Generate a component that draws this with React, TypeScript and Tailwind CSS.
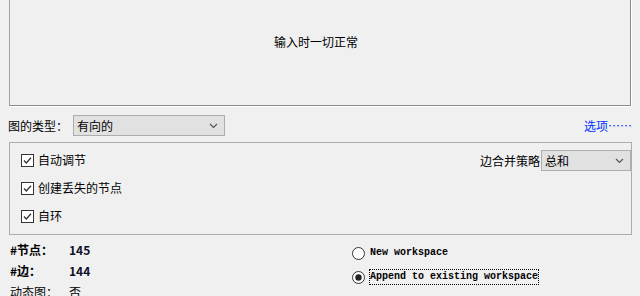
import React from "react";

const cjk = { fontFamily: '"Noto Sans CJK SC", "Noto Sans", sans-serif' };
const mono = { fontFamily: '"Liberation Mono", "DejaVu Sans Mono", monospace' };

function Chevron() {
  return (
    <svg width="9" height="6" viewBox="0 0 9 6" className="block">
      <path d="M1 1 L4.5 4.5 L8 1" fill="none" stroke="#555" strokeWidth="1.2" />
    </svg>
  );
}

function Select({ value, className }: { value: string; className: string }) {
  return (
    <div
      className={
        "flex items-center justify-between border border-[#adadad] bg-[#e1e1e1] pl-[3px] pr-[6px] text-[12px] text-black " +
        className
      }
    >
      <span className="leading-none">{value}</span>
      <Chevron />
    </div>
  );
}

function Check({ label }: { label: string }) {
  return (
    <div className="flex h-[28px] items-center gap-[4px]">
      <svg width="13" height="13" viewBox="0 0 13 13" className="block shrink-0">
        <rect x="0.5" y="0.5" width="12" height="12" fill="#fff" stroke="#333" />
        <path d="M3 6.5 L5.3 9 L10 3.8" fill="none" stroke="#333" strokeWidth="1.3" />
      </svg>
      <span className="text-[12px] leading-none text-black">{label}</span>
    </div>
  );
}

function Radio({ checked, label, focus }: { checked?: boolean; label: string; focus?: boolean }) {
  return (
    <div className="flex h-[24px] items-center gap-[4px]">
      <svg width="13" height="13" viewBox="0 0 13 13" className="block shrink-0">
        <circle cx="6.5" cy="6.5" r="6" fill="#fff" stroke="#333" />
        {checked && <circle cx="6.5" cy="6.5" r="3.2" fill="#222" />}
      </svg>
      <span
        style={mono}
        className={
          "text-[10px] font-bold leading-[14px] text-black " +
          (focus ? "border border-dotted border-black" : "border border-transparent")
        }
      >
        {label}
      </span>
    </div>
  );
}

export default function App() {
  return (
    <div style={cjk} className="h-[296px] w-[640px] overflow-hidden bg-[#f0f0f0]">
      {/* top panel */}
      <div className="ml-[9px] mr-[8px] h-[107px] border-r border-b border-white">
        <div className="flex h-full items-center justify-center border-l border-r border-b border-[#8c8c90] border-l-[#a0a0a0] pb-[22px]">
          <span className="mr-[8px] text-[12px] text-black">输入时一切正常</span>
        </div>
      </div>

      {/* type row */}
      <div className="mt-[8px] flex h-[21px] items-center">
        <span className="ml-[8px] w-[65px] text-[12px] text-black">图的类型：</span>
        <Select value="有向的" className="h-[21px] w-[152px]" />
        <span className="ml-auto mr-[8px] text-[12px] text-[#0033ff]">选项……</span>
      </div>

      {/* group */}
      <div className="ml-[9px] mr-[8px] mt-[6px] flex h-[93px] border border-[#acacac]">
        <div className="flex flex-col pl-[11px] pt-[3px]">
          <Check label="自动调节" />
          <Check label="创建丢失的节点" />
          <Check label="自环" />
        </div>
        <div className="ml-auto flex items-start pt-[7px]">
          <div className="flex h-[21px] items-center">
            <span className="mr-[1px] text-[12px] text-black">边合并策略</span>
            <Select value="总和" className="h-[21px] w-[90px]" />
          </div>
        </div>
      </div>

      {/* stats */}
      <div className="flex">
        <div className="ml-[10px] flex w-[330px] flex-col pt-[4px]">
          <div className="flex h-[21px] items-center text-[12px] font-bold text-black">
            <span className="w-[59px]">#节点：</span>
            <span className="text-[#10102a]">145</span>
          </div>
          <div className="flex h-[21px] items-center text-[12px] font-bold text-black">
            <span className="w-[59px]">#边：</span>
            <span className="text-[#10102a]">144</span>
          </div>
          <div className="flex h-[21px] items-center text-[12px] text-black">
            <span className="w-[59px]">动态图：</span>
            <span>否</span>
          </div>
        </div>
        <div className="ml-[12px] flex flex-col pt-[6px]">
          <Radio label="New workspace" />
          <Radio checked focus label="Append to existing workspace" />
        </div>
      </div>
    </div>
  );
}
